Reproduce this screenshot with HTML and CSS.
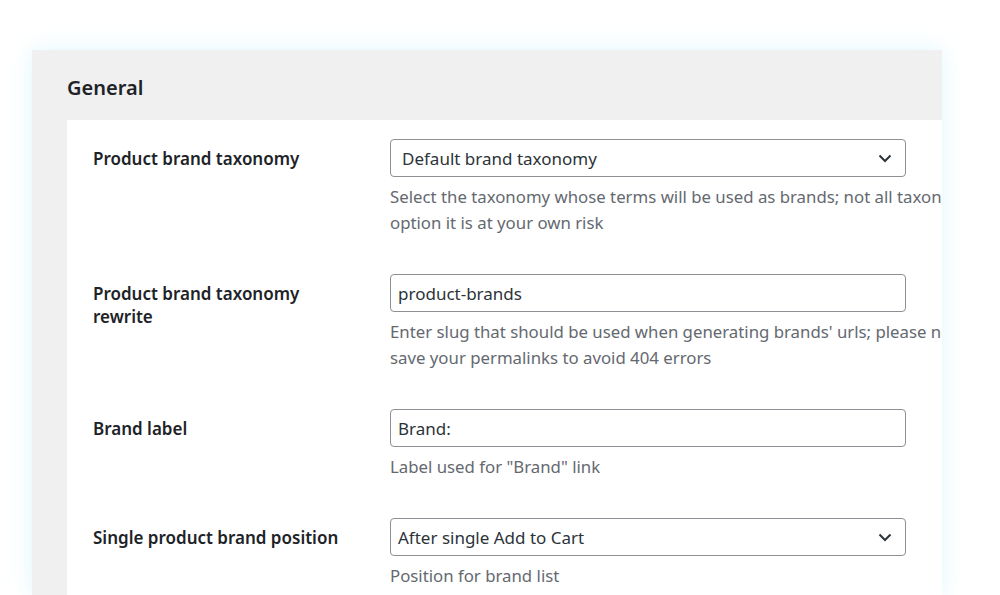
FILE: index.html
```html
<!DOCTYPE html>
<html lang="en">
<head>
<meta charset="utf-8">
<title>General settings</title>
<link rel="stylesheet" href="styles.css">
</head>
<body>
<div class="card">
  <h2 class="card-title">General</h2>
  <div class="panel">
    <div class="row">
      <div class="label">Product brand taxonomy</div>
      <div class="field">
        <div class="control select select-wide">
          <span>Default brand taxonomy</span>
          <svg class="chev" width="14" height="9" viewBox="0 0 14 9"><path d="M1.5 1.5 L7 7 L12.5 1.5" fill="none" stroke="#2c3338" stroke-width="2"/></svg>
        </div>
        <p class="desc">Select the taxonomy whose terms will be used as brands; not all taxonomies may be suitable, so if you choose to use a different<br>option it is at your own risk</p>
      </div>
    </div>
    <div class="row">
      <div class="label">Product brand taxonomy rewrite</div>
      <div class="field">
        <div class="control input">product-brands</div>
        <p class="desc">Enter slug that should be used when generating brands' urls; please note that after changing this value you'll need to<br>save your permalinks to avoid 404 errors</p>
      </div>
    </div>
    <div class="row">
      <div class="label">Brand label</div>
      <div class="field">
        <div class="control input">Brand:</div>
        <p class="desc">Label used for "Brand" link</p>
      </div>
    </div>
    <div class="row">
      <div class="label">Single product brand position</div>
      <div class="field">
        <div class="control select">
          <span>After single Add to Cart</span>
          <svg class="chev" width="14" height="9" viewBox="0 0 14 9"><path d="M1.5 1.5 L7 7 L12.5 1.5" fill="none" stroke="#2c3338" stroke-width="2"/></svg>
        </div>
        <p class="desc">Position for brand list</p>
      </div>
    </div>
  </div>
</div>
</body>
</html>
```

FILE: styles.css
```css
html, body {
  margin: 0;
  padding: 0;
  background: #ffffff;
  height: 595px;
  overflow: hidden;
}
body {
  font-family: "Noto Sans", "Open Sans", sans-serif;
  color: #1d2327;
}
.card {
  margin: 50px 0 0 32px;
  width: 910px;
  height: 545px;
  background: #f0f0f0;
  box-shadow: 0 0 22px rgba(120, 220, 240, 0.22);
  overflow: hidden;
  padding-left: 35px;
  box-sizing: border-box;
}
.card-title {
  margin: 0;
  height: 70px;
  line-height: 76px;
  font-size: 20px;
  font-weight: 600;
  color: #1d2327;
}
.panel {
  background: #ffffff;
  width: 1000px;
  padding: 19px 0 0 26px;
  box-sizing: border-box;
  min-height: 475px;
}
.row {
  display: grid;
  grid-template-columns: 250px 1fr;
  column-gap: 47px;
  margin-bottom: 38px;
}
.label {
  padding-top: 8px;
  font-size: 17px;
  font-weight: 600;
  line-height: 23px;
  color: #1d2327;
}
.field {
  min-width: 0;
}
.control {
  width: 516px;
  height: 38px;
  box-sizing: border-box;
  border: 1px solid #8c8f94;
  border-radius: 4px;
  background: #fff;
  display: flex;
  align-items: center;
  padding: 0 8px 0 7px;
  font-size: 17px;
  color: #2c3338;
}
.select {
  justify-content: space-between;
  padding-right: 13px;
}
.select-wide {
  padding-left: 11px;
}
.chev {
  display: block;
}
.desc {
  margin: 7px 0 0;
  font-size: 16.8px;
  line-height: 26px;
  color: #646970;
  white-space: nowrap;
}
```
